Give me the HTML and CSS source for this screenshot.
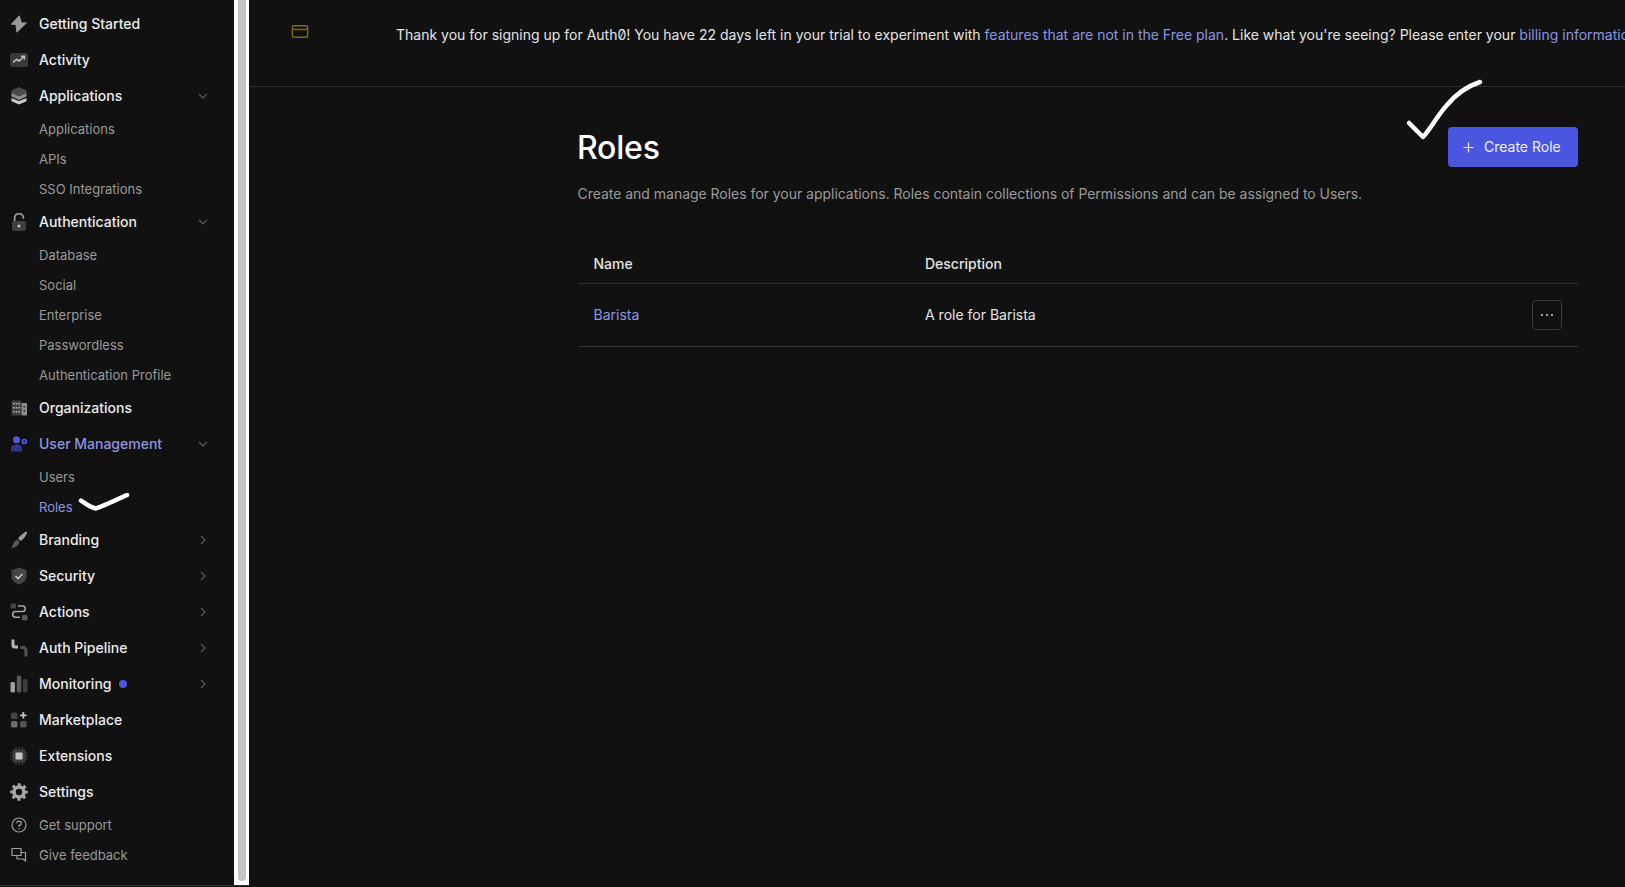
FILE: index.html
```html
<!DOCTYPE html>
<html lang="en">
<head>
<meta charset="utf-8">
<title>Roles</title>
<link rel="stylesheet" href="styles.css">
</head>
<body>
<div class="left">
<aside class="sidebar">
  <nav class="nav">
    <a class="item"><svg class="ico" viewBox="0 0 18 18"><path fill="#9a9a9a" stroke="#9a9a9a" stroke-width="1" stroke-linejoin="round" d="M9.300 0.800 1.300 9.300h4.600L6.900 17.200 16.400 7.900h-5.100z"/></svg><span>Getting Started</span></a>
    <a class="item"><svg class="ico" viewBox="0 0 18 18"><rect x="0" y="2" width="18" height="14" rx="2.500" fill="#3a3a3a"/><path fill="none" stroke="#c4c4c4" stroke-width="1.500" d="M3 11.500l3.500-3 2.500 1.500 5-4.500M11 5.200h3.400v3.200"/></svg><span>Activity</span></a>
    <a class="item"><svg class="ico" viewBox="0 0 18 18"><path fill="#4a4a4a" d="M9 0l7.500 3.500v3L9 9 1.500 6.500v-3z"/><path fill="#8a8a8a" d="M1.500 6L9 9.300 16.500 6v3.500L9 13 1.500 9.500z"/><path fill="#c8c8c8" d="M1.500 11L9 14l7.500-3v3.200L9 17.500l-7.500-3.300z"/></svg><span>Applications</span><svg class="chev" viewBox="0 0 10 10"><path d="M1 3l4 4 4-4"/></svg></a>
    <a class="sub">Applications</a>
    <a class="sub">APIs</a>
    <a class="sub">SSO Integrations</a>
    <a class="item"><svg class="ico" viewBox="0 0 18 18"><rect x="2" y="8" width="14" height="10" rx="2" fill="#3f3f3f"/><path fill="none" stroke="#9a9a9a" stroke-width="1.800" d="M4.600 8V5a4.400 4.400 0 0 1 8.800 0v.8"/><circle cx="9" cy="13" r="1.600" fill="#c4c4c4"/></svg><span>Authentication</span><svg class="chev" viewBox="0 0 10 10"><path d="M1 3l4 4 4-4"/></svg></a>
    <a class="sub">Database</a>
    <a class="sub">Social</a>
    <a class="sub">Enterprise</a>
    <a class="sub">Passwordless</a>
    <a class="sub">Authentication Profile</a>
    <a class="item"><svg class="ico" viewBox="0 0 18 18"><rect x="1.500" y="1.500" width="10" height="15" rx="1.500" fill="#3f3f3f"/><rect x="11.500" y="4" width="5.500" height="12.500" rx="1" fill="#8a8a8a"/><path fill="#b0b0b0" d="M3 4h1.600v1.600H3zM5.700 4h1.600v1.600H5.700zM8.400 4H10v1.600H8.400zM3 8h1.600v1.600H3zM5.700 8h1.600v1.600H5.700zM8.400 8H10v1.600H8.400zM3 12h1.600v1.600H3zM5.700 12h1.600v1.600H5.700zM8.400 12H10v1.600H8.400z"/><path fill="#222" d="M13.500 7h1.600v1.600h-1.600zM13.500 11h1.600v1.600h-1.600z"/></svg><span>Organizations</span></a>
    <a class="item active"><svg class="ico" viewBox="0 0 18 18"><circle cx="6.500" cy="4.800" r="3.500" fill="#4f5be0"/><path fill="#2f358c" d="M1 16.500v-3c0-2.500 2.300-4 5.500-4s5.500 1.500 5.500 4v3z"/><circle cx="14.300" cy="6.500" r="1.900" fill="none" stroke="#4f5be0" stroke-width="1.800"/></svg><span>User Management</span><svg class="chev" viewBox="0 0 10 10"><path d="M1 3l4 4 4-4"/></svg></a>
    <a class="sub">Users</a>
    <a class="sub current">Roles</a>
    <a class="item"><svg class="ico" viewBox="0 0 18 18"><path fill="#9a9a9a" d="M17 0.500c.4 2.500-3 7.500-6.500 9.500L8 7.500C10.500 4 14.500 1 17 0.500z"/><path fill="#5a5a5a" d="M7 8.500l2.500 2.500c-.5 3.500-4.500 6-8.500 6 2.500-2 2-6.500 6-8.500z"/></svg><span>Branding</span><svg class="chev" viewBox="0 0 10 10"><path d="M3 1l4 4-4 4"/></svg></a>
    <a class="item"><svg class="ico" viewBox="0 0 18 18"><path fill="#444" d="M9 0.500l7.500 2.500v6.500c0 4-3.500 6.800-7.500 8-4-1.200-7.500-4-7.500-8V3z"/><path fill="none" stroke="#c4c4c4" stroke-width="1.700" d="M5.500 9l2.500 2.500 4.500-4.500"/></svg><span>Security</span><svg class="chev" viewBox="0 0 10 10"><path d="M3 1l4 4-4 4"/></svg></a>
    <a class="item"><svg class="ico" viewBox="0 0 18 18"><rect x="0.500" y="0.500" width="5.500" height="5" rx="1" fill="#444"/><rect x="12" y="12" width="5.500" height="5.500" rx="1" fill="#5a5a5a"/><path fill="none" stroke="#a8a8a8" stroke-width="1.500" d="M8 3h4.500a2.700 2.700 0 0 1 0 5.500h-7a2.700 2.700 0 0 0 0 5.700H10"/></svg><span>Actions</span><svg class="chev" viewBox="0 0 10 10"><path d="M3 1l4 4-4 4"/></svg></a>
    <a class="item"><svg class="ico" viewBox="0 0 18 18"><path fill="none" stroke="#b8b8b8" stroke-width="3" d="M3 0.500v5.500a2 2 0 0 0 2 2h3"/><path fill="none" stroke="#555" stroke-width="3" d="M10.500 8.500h2.500a3 3 0 0 1 3 3v6"/></svg><span>Auth Pipeline</span><svg class="chev" viewBox="0 0 10 10"><path d="M3 1l4 4-4 4"/></svg></a>
    <a class="item"><svg class="ico" viewBox="0 0 18 18"><rect x="0.500" y="7" width="4.500" height="10.500" rx="1.500" fill="#a0a0a0"/><rect x="6.800" y="0.500" width="4.500" height="17" rx="1.500" fill="#5a5a5a"/><rect x="13" y="4" width="4.500" height="13.500" rx="1.500" fill="#3c3c3c"/></svg><span>Monitoring</span><i class="dot"></i><svg class="chev" viewBox="0 0 10 10"><path d="M3 1l4 4-4 4"/></svg></a>
    <a class="item"><svg class="ico" viewBox="0 0 18 18"><rect x="1" y="1.500" width="6.500" height="6.500" rx="1.500" fill="#444"/><rect x="1" y="10" width="6.500" height="6.500" rx="1.500" fill="#6a6a6a"/><rect x="10" y="10" width="6.500" height="6.500" rx="1.500" fill="#555"/><path stroke="#c4c4c4" stroke-width="1.800" d="M13.300 1v6.500M10 4.300h6.500"/></svg><span>Marketplace</span></a>
    <a class="item"><svg class="ico" viewBox="0 0 18 18"><rect x="2.500" y="2.500" width="13" height="13" rx="2" fill="#3f3f3f"/><rect x="5.500" y="5.500" width="7" height="7" rx="1" fill="#c4c4c4"/><path stroke="#3f3f3f" stroke-width="1.200" d="M6 0v18M9 0v18M12 0v18M0 6h18M0 9h18M0 12h18" stroke-dasharray="3 12"/></svg><span>Extensions</span></a>
    <a class="item"><svg class="ico" viewBox="0 0 18 18"><circle cx="9" cy="9" r="5" fill="none" stroke="#a8a8a8" stroke-width="3.600"/><circle cx="9" cy="9" r="7.300" fill="none" stroke="#a8a8a8" stroke-width="3" stroke-dasharray="2.900 2.833" stroke-dashoffset="1.450"/></svg><span>Settings</span></a>
    <a class="sub with-ico"><svg class="ico" viewBox="0 0 18 18"><circle cx="9" cy="9" r="7" fill="none" stroke="#a0a0a0" stroke-width="1.200"/><path fill="none" stroke="#a0a0a0" stroke-width="1.300" d="M6.800 7.200A2.200 2.200 0 1 1 9 9.500v1.300"/><circle cx="9" cy="12.800" r=".8" fill="#a0a0a0"/></svg><span>Get support</span></a>
    <a class="sub with-ico"><svg class="ico" viewBox="0 0 18 18"><path fill="none" stroke="#a0a0a0" stroke-width="1.200" d="M2 2.500h9v7H2zM7 9.500v3.500h6l2.500 2v-8.500H11"/></svg><span>Give feedback</span></a>
  </nav>
</aside>
<div class="track"><div class="thumb"></div></div>
</div>
<main class="main">
  <section class="banner">
    <svg class="card" viewBox="0 0 18 14"><rect x=".8" y=".8" width="16.400" height="12.400" rx="2" fill="none" stroke="#7d6a22" stroke-width="1.500"/><path stroke="#7d6a22" stroke-width="1.500" d="M.8 4.800h16.400"/></svg>
    <p class="banner-text">Thank you for signing up for Auth0! You have 22 days left in your trial to experiment with <a class="link">features that are not in the Free plan</a>. Like what you're seeing? Please enter your <a class="link">billing information here</a>.</p>
  </section>
  <section class="content">
    <header class="head">
      <h1>Roles</h1>
      <button class="create"><svg class="plus" viewBox="0 0 12 12"><path d="M6 .5v11M.5 6h11"/></svg>Create Role</button>
    </header>
    <p class="desc">Create and manage Roles for your applications. Roles contain collections of Permissions and can be assigned to Users.</p>
    <div class="row row-head"><span class="c1">Name</span><span>Description</span></div>
    <div class="row row-body"><span class="c1 link cell">Barista</span><span class="cell">A role for Barista</span><button class="more"><i></i><i></i><i></i></button></div>
  </section>
</main>
<svg class="mark mark-small" viewBox="0 0 60 24"><path d="M3 7.500C8 11 12 14.500 18 15.500 25 13 36 8 49 2"/></svg>
<svg class="mark mark-big" viewBox="0 0 84 70"><path d="M4 45 C8 49 14 55 18 59 C25 52 32 38 42 27 C52 15 63 8 75 4"/></svg>
</body>
</html>
```
FILE: styles.css
```css
* { box-sizing: border-box; }
html, body { margin: 0; height: 100%; }
body {
  display: flex;
  height: 887px;
  overflow: hidden;
  background: #111;
  color: #fff;
  font-family: Inter, "Liberation Sans", sans-serif;
  font-size: 14px;
}
.left {
  display: flex;
  flex: none;
  width: 249px;
  height: 886px;
  border-bottom: 1px solid #333;
}
.sidebar {
  width: 234px;
  flex: none;
  padding-top: 6px;
  background: #111;
}
.nav { display: flex; flex-direction: column; }
.item, .sub { display: flex; align-items: center; }
.item {
  height: 36px;
  padding-left: 39px;
  padding-bottom: 2px;
  position: relative;
  font-weight: 500;
  font-size: 14px;
  color: #ececec;
}
.sub {
  height: 30px;
  padding-left: 39px;
  position: relative;
  font-size: 13px;
  color: #9a9a9a;
}
.ico {
  position: absolute;
  left: 10px;
  top: 50%;
  width: 18px;
  height: 18px;
  margin-top: -9px;
}
.chev {
  position: absolute;
  left: 198px;
  top: 50%;
  width: 10px;
  height: 10px;
  margin-top: -5px;
  fill: none;
  stroke: #5c5c5c;
  stroke-width: 1.100;
}
.active { color: #8b96e0; }
.current { color: #8b96e0; }
.dot {
  width: 8px;
  height: 8px;
  margin: 2px 0 0 8px;
  border-radius: 50%;
  background: #4a55e0;
}
.track {
  width: 15px;
  flex: none;
  padding: 0 3px 4px 4px;
  background: #fff;
}
.thumb {
  height: 100%;
  background: #c4c4c4;
  border-radius: 0 0 4px 4px;
}
.main { flex: 1; min-width: 0; overflow: hidden; }
.banner {
  display: flex;
  height: 87px;
  padding: 25px 0 0 42px;
  border-bottom: 1px solid #2c2c2c;
}
.card { width: 18px; height: 13px; flex: none; }
.banner-text {
  margin: 1px 0 0 87px;
  white-space: nowrap;
  line-height: 18px;
  color: #e4e4e4;
  font-variant-numeric: slashed-zero;
}
.link { color: #8b96e0; }
.content { width: 1329px; padding: 40px 0 0 329px; }
.head {
  display: flex;
  justify-content: space-between;
  align-items: center;
  height: 40px;
}
h1 {
  margin: 2px 0 0 -1px;
  font-size: 32px;
  font-weight: 500;
  line-height: 40px;
  letter-spacing: -0.2px;
}
.create {
  display: flex;
  align-items: center;
  width: 130px;
  height: 40px;
  padding: 0 0 2px 15px;
  border: 0;
  border-radius: 4px;
  background: #4a55e0;
  color: #f0f0ff;
  font: 400 14px Inter, "Liberation Sans", sans-serif;
}
.plus {
  width: 11px;
  height: 11px;
  margin: 2px 10px 0 0;
  fill: none;
  stroke: #f0f0ff;
  stroke-width: 1.300;
}
.desc {
  margin: 17px 0 0 -0.500px;
  line-height: 20px;
  letter-spacing: -0.027px;
  color: #9a9a9a;
}
.row {
  display: flex;
  align-items: center;
  border-bottom: 1px solid #333;
}
.c1 { width: 347px; padding-left: 15.500px; }
.row-head {
  height: 40px;
  margin-top: 40px;
  font-weight: 500;
  color: #e4e4e4;
}
.row-body { height: 63px; color: #e4e4e4; position: relative; }
.cell { margin-bottom: 2px; }
.more {
  display: flex;
  justify-content: center;
  align-items: center;
  gap: 3px;
  width: 30px;
  height: 30px;
  margin-left: auto;
  margin-right: 16px;
  padding: 0;
  background: #111;
  border: 1px solid #3a3a3a;
  border-radius: 4px;
}
.more i { width: 2px; height: 2px; background: #ccc; border-radius: 50%; }
.mark {
  position: absolute;
  fill: none;
  stroke: #fff;
  stroke-linecap: round;
  stroke-linejoin: round;
}
.mark-small { left: 78px; top: 493px; width: 60px; height: 24px; stroke-width: 4.500; }
.mark-big { left: 1405px; top: 78px; width: 84px; height: 70px; stroke-width: 4.500; }
```
